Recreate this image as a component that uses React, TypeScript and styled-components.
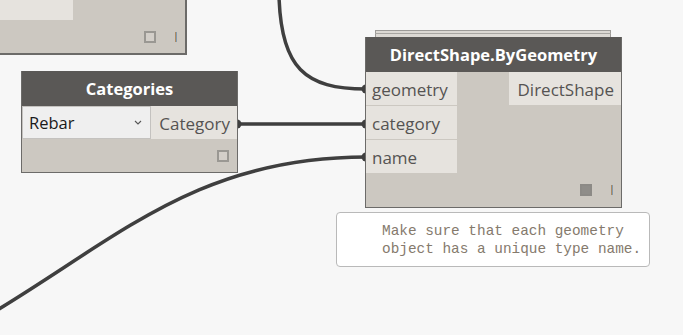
import { createGlobalStyle } from 'styled-components';
import styled from 'styled-components';

const GlobalStyle = createGlobalStyle`
  html, body {
    margin: 0;
    padding: 0;
    background: #f7f7f7;
  }
  * {
    box-sizing: border-box;
  }
`;

const Canvas = styled.div`
  position: relative;
  width: 683px;
  height: 335px;
  overflow: hidden;
  background: #f7f7f7;
  font-family: 'Open Sans', 'Noto Sans', sans-serif;
`;

const Wires = styled.svg`
  position: absolute;
  left: 0;
  top: 0;
`;

// NODE
const NodeBox = styled.div<{ $x: number; $y: number; $w: number }>`
  position: absolute;
  left: ${(p) => p.$x}px;
  top: ${(p) => p.$y}px;
  width: ${(p) => p.$w}px;
  background: #ccc8c1;
  border: 1px solid #6c6b69;
  border-top: none;
`;

const Stack = styled.div`
  position: absolute;
  left: 9px;
  right: 10px;
  top: -7px;
  height: 7px;
  background: #dcd9d4;
  border: 1px solid #9d9b98;
  border-bottom: none;

  &::after {
    content: '';
    position: absolute;
    left: -1px;
    right: -1px;
    top: 2px;
    border-top: 1px solid #a8a6a2;
  }
`;

const Header = styled.div`
  height: 35px;
  background: #5a5856;
  color: #ffffff;
  font-weight: 700;
  font-size: 16.5px;
  display: flex;
  align-items: center;
  justify-content: center;
  padding-bottom: 1px;
`;

const Body = styled.div`
  display: flex;
  justify-content: space-between;
  align-items: flex-start;
`;

const Column = styled.div`
  display: flex;
  flex-direction: column;
  gap: 1px;
`;

const Port = styled.div<{ $w: number; $h?: number; $right?: boolean }>`
  width: ${(p) => p.$w}px;
  height: ${(p) => p.$h ?? 33}px;
  background: #e6e3de;
  color: #555352;
  font-size: 17px;
  display: flex;
  align-items: center;
  justify-content: ${(p) => (p.$right ? 'flex-end' : 'flex-start')};
  padding: 1px 7px 0 6px;
  white-space: nowrap;
`;

const Dropdown = styled.div`
  flex: 1;
  height: 33px;
  background: #efefef;
  border: 1px solid #c4c2bf;
  color: #1a1a1a;
  font-size: 16.5px;
  display: flex;
  align-items: center;
  justify-content: space-between;
  padding: 0 8px 0 6px;
`;

const Footer = styled.div<{ $h: number }>`
  height: ${(p) => p.$h}px;
  display: flex;
  justify-content: flex-end;
  align-items: center;
  gap: 19px;
  padding-right: 8px;
`;

const Square = styled.div<{ $filled?: boolean }>`
  width: 12px;
  height: 12px;
  border: 2px solid ${(p) => (p.$filled ? '#8c8a86' : '#9a9893')};
  background: ${(p) => (p.$filled ? '#8f8d89' : '#d3cfc9')};
`;

const Tick = styled.div`
  width: 2px;
  height: 10px;
  background: linear-gradient(90deg, #b08a60 50%, #7f9bb3 50%);
`;

const Bubble = styled.div`
  position: absolute;
  left: 336px;
  top: 212px;
  width: 314px;
  height: 55px;
  background: #ffffff;
  border: 1px solid #b9b9b9;
  border-radius: 4px;
  padding: 10px 0 0 45px;
  font-family: 'Liberation Mono', 'DejaVu Sans Mono', monospace;
  font-size: 14.4px;
  line-height: 17.5px;
  color: #857a6d;
  white-space: pre;
`;

const Chevron = () => (
  <svg width="8" height="5" viewBox="0 0 8 5">
    <path d="M1 1 L4 4 L7 1" fill="none" stroke="#555" strokeWidth="1.1" />
  </svg>
);

export default function App() {
  return (
    <>
      <GlobalStyle />
      <Canvas>
        <Wires width={683} height={335}>
          <g fill="none" stroke="#3f3f3f" strokeWidth={3.5} strokeLinecap="round">
            <path d="M279 -4 C281 68, 305 89, 366 89" />
            <path d="M238 124 L366 124" />
            <path d="M-6 312 C120 236, 200 157, 366 157" />
          </g>
          <g fill="#3f3f3f">
            <circle cx={366} cy={89} r={4.5} />
            <circle cx={366} cy={124} r={4.5} />
            <circle cx={366} cy={157} r={4.5} />
            <circle cx={237} cy={124} r={4.5} />
          </g>
        </Wires>

        {/* node cut off at the top left */}
        <NodeBox $x={-60} $y={-40} $w={247} style={{ borderBottomWidth: 2, borderRightWidth: 2 }}>
          <Body>
            <Column>
              <Port $w={132} $h={60} />
            </Column>
          </Body>
          <Footer $h={33}>
            <Square />
            <Tick />
          </Footer>
        </NodeBox>

        {/* Categories */}
        <NodeBox $x={21} $y={71} $w={217}>
          <Header>Categories</Header>
          <Body>
            <Dropdown>
              Rebar
              <Chevron />
            </Dropdown>
            <Port $w={86} $right>
              Category
            </Port>
          </Body>
          <Footer $h={33}>
            <Square />
          </Footer>
        </NodeBox>

        {/* DirectShape.ByGeometry */}
        <NodeBox $x={365} $y={37} $w={257}>
          <Stack />
          <Header>DirectShape.ByGeometry</Header>
          <Body>
            <Column>
              <Port $w={91}>geometry</Port>
              <Port $w={91}>category</Port>
              <Port $w={91}>name</Port>
            </Column>
            <Port $w={112} $right>
              DirectShape
            </Port>
          </Body>
          <Footer $h={34}>
            <Square $filled />
            <Tick />
          </Footer>
        </NodeBox>

        <Bubble>{'Make sure that each geometry\nobject has a unique type name.'}</Bubble>
      </Canvas>
    </>
  );
}
